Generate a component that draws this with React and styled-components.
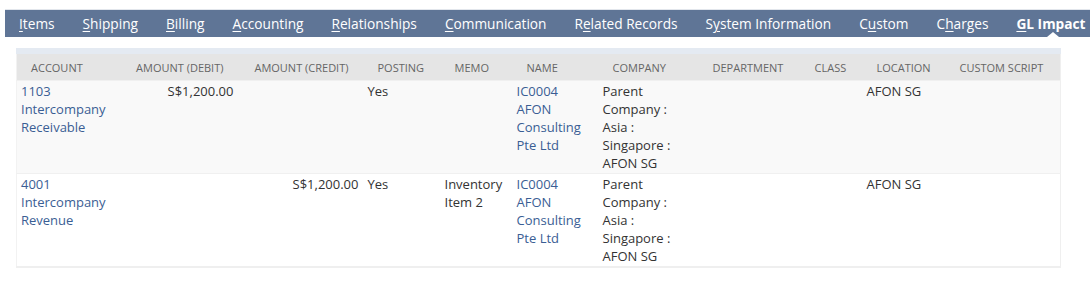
import React from "react";
import styled, { createGlobalStyle } from "styled-components";

const GlobalStyle = createGlobalStyle`
  body {
    margin: 0;
    background: #fff;
    font-family: "Open Sans", "Liberation Sans", sans-serif;
    overflow: hidden;
  }
`;

const Page = styled.div`
  width: 1090px;
  padding-top: 9px;
`;

const TabBar = styled.div`
  display: flex;
  margin-left: 5px;
  height: 27px;
  border-top: 1px solid #e2e6ec;
  background: #5f7596;
  white-space: nowrap;
`;

const Tab = styled.div`
  position: relative;
  padding: 0 14px;
  line-height: 27px;
  font-size: 13.7px;
  color: #fff;
  font-weight: ${p => (p.$active ? 700 : 400)};
  flex-shrink: 0;

  u {
    text-decoration: underline;
    text-underline-offset: 2px;
  }

  ${p =>
    p.$active &&
    `
    &::after {
      content: "";
      position: absolute;
      left: 45px;
      bottom: 0;
      border-left: 6px solid transparent;
      border-right: 6px solid transparent;
      border-bottom: 5px solid #fff;
    }
  `}
`;

const Table = styled.table`
  margin: 11px 0 0 16px;
  width: 1044px;
  table-layout: fixed;
  border-collapse: collapse;
  border-top: 6px solid #e4eaf2;
  border-bottom: 2px solid #efefef;
  border-left: 1px solid #f2f2f2;
  border-right: 1px solid #efefef;
`;

const HeadCell = styled.th`
  height: 26px;
  padding: 0 ${p => (p.$right ? "15px" : "0")} 0 ${p => (p.$right ? "0" : "14px")};
  background: #e5e5e5;
  color: #666;
  font-size: 11px;
  font-weight: 400;
  text-transform: uppercase;
  text-align: ${p => (p.$right ? "right" : "left")};
  white-space: nowrap;
  overflow: hidden;
`;

const Row = styled.tr`
  background: ${p => (p.$shade ? "#f9f9f9" : "#fff")};
  border-top: 1px solid #f0f0f0;
`;

const Cell = styled.td`
  height: 90px;
  padding: 1px 5px 1px 4px;
  vertical-align: top;
  font-size: 13px;
  line-height: 18px;
  color: ${p => (p.$link ? "#3a5e94" : "#333")};
  text-align: ${p => (p.$right ? "right" : "left")};
  white-space: ${p => (p.$right ? "nowrap" : "normal")};
`;

const tabs = [
  ["", "I", "tems"],
  ["", "S", "hipping"],
  ["", "B", "illing"],
  ["", "A", "ccounting"],
  ["", "R", "elationships"],
  ["", "C", "ommunication"],
  ["R", "e", "lated Records"],
  ["S", "y", "stem Information"],
  ["C", "u", "stom"],
  ["C", "h", "arges"],
  ["", "G", "L Impact"]
];

const columns = [
  { label: "Account", width: 104 },
  { label: "Amount (Debit)", width: 118, right: true },
  { label: "Amount (Credit)", width: 125, right: true },
  { label: "Posting", width: 77 },
  { label: "Memo", width: 72 },
  { label: "Name", width: 86 },
  { label: "Company", width: 100 },
  { label: "Department", width: 102 },
  { label: "Class", width: 62 },
  { label: "Location", width: 83 },
  { label: "Custom Script", width: 115 }
];

const company = "Parent Company : Asia : Singapore : AFON SG";

const rows = [
  {
    account: "1103 Intercompany Receivable",
    debit: "S$1,200.00",
    credit: "",
    memo: ""
  },
  {
    account: "4001 Intercompany Revenue",
    debit: "",
    credit: "S$1,200.00",
    memo: "Inventory Item 2"
  }
];

export default function App() {
  return (
    <Page>
      <GlobalStyle />
      <TabBar>
        {tabs.map(([pre, key, rest], i) => (
          <Tab key={i} $active={i === tabs.length - 1}>
            {pre}
            <u>{key}</u>
            {rest}
          </Tab>
        ))}
      </TabBar>
      <Table>
        <colgroup>
          {columns.map(c => (
            <col key={c.label} style={{ width: c.width }} />
          ))}
        </colgroup>
        <thead>
          <tr>
            {columns.map(c => (
              <HeadCell key={c.label} $right={c.right}>
                {c.label}
              </HeadCell>
            ))}
          </tr>
        </thead>
        <tbody>
          {rows.map((r, i) => (
            <Row key={i} $shade={i === 0}>
              <Cell $link>{r.account}</Cell>
              <Cell $right>{r.debit}</Cell>
              <Cell $right>{r.credit}</Cell>
              <Cell>Yes</Cell>
              <Cell>{r.memo}</Cell>
              <Cell $link>IC0004 AFON Consulting Pte Ltd</Cell>
              <Cell>{company}</Cell>
              <Cell />
              <Cell />
              <Cell>AFON SG</Cell>
              <Cell />
            </Row>
          ))}
        </tbody>
      </Table>
    </Page>
  );
}
